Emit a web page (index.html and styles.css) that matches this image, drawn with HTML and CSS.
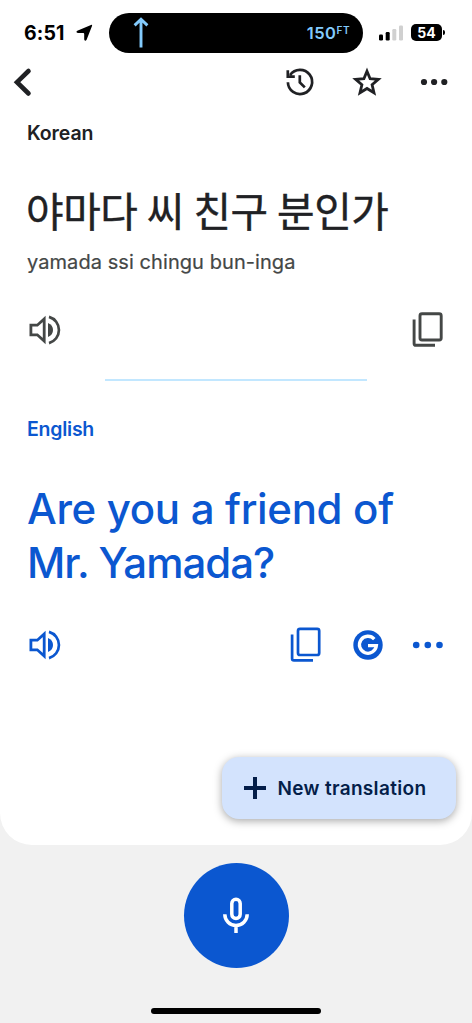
FILE: index.html
```html
<!DOCTYPE html>
<html lang="en">
<head>
<meta charset="utf-8">
<title>Translate</title>
<link rel="stylesheet" href="styles.css">
</head>
<body>
<main class="screen">
  <section class="card">
    <header class="status">
      <span class="time">6:51</span>
      <svg class="location" width="18" height="18" viewBox="0 0 18 18"><path d="M16 .9Q17.6.4 17 2L11.6 15.8Q10.2 18 9.2 15.5V9.9Q9.2 9 8.3 9H2.9Q.2 8.2 2.3 6.7Z"/></svg>
      <div class="island">
        <svg width="16" height="32" viewBox="0 0 16 32"><path d="M8 30.4V3M1.6 8.4 8 2.2 14.4 8.4" fill="none" stroke="#83cbfd" stroke-width="2.9"/></svg>
        <span class="distance">150<span class="unit">FT</span></span>
      </div>
      <svg class="signal" width="25" height="16" viewBox="0 0 25 16"><rect y="9.5" width="4" height="6" rx="1.2"/><rect x="6.7" y="7" width="4" height="8.5" rx="1.2"/><g fill="#d0d0d0"><rect x="13.3" y="4" width="4" height="11.5" rx="1.2"/><rect x="20" y=".5" width="4" height="15" rx="1.2"/></g></svg>
      <span class="battery">54</span><span class="battery-tip"></span>
    </header>
    <nav class="toolbar">
      <svg class="back" width="20" height="30" viewBox="0 0 20 30"><path d="M15.5 4 4 15.2 15.5 26.5" fill="none" stroke="#202124" stroke-width="4.6" stroke-linecap="round"/></svg>
      <svg class="history" width="30" height="30" viewBox="0 0 30 30" fill="none" stroke="#202124" stroke-width="2.7"><path d="M2.9 15.2A12.1 12.1 0 1 0 5.1 8M2.8 3.2V9.6H9.8M14.8 8.3V15.4L19.8 20.4"/></svg>
      <svg class="star" width="32" height="32" viewBox="0 0 32 32"><path d="M16 5.2 19.1 12.7 27.3 13.4 21.1 18.7 23 26.8 16 22.5 9 26.8 10.9 18.7 4.7 13.4 12.9 12.7Z" fill="none" stroke="#202124" stroke-width="2.8"/></svg>
      <svg class="more" width="28" height="8" viewBox="0 0 28 8" fill="#202124"><circle cx="4" cy="4" r="3.1"/><circle cx="14.1" cy="4" r="3.1"/><circle cx="24.3" cy="4" r="3.1"/></svg>
    </nav>
    <article class="source">
      <h2 class="language">Korean</h2>
      <p class="phrase" lang="ko">야마다 씨 친구 분인가</p>
      <p class="reading">yamada ssi chingu bun-inga</p>
      <div class="actions">
        <svg class="speaker" width="34" height="32" viewBox="0 0 34 32"><path d="M2.9 11.2H9.3L16.2 5V27L9.3 20.8H2.9Z" fill="none" stroke="currentColor" stroke-width="2.8"/><path d="M20 9Q25 11 25 16T20 23Z" fill="currentColor"/><path d="M21 2.9A13.6 13.6 0 0 1 21 29.1" fill="none" stroke="currentColor" stroke-width="2.7"/></svg>
        <svg class="copy" width="32" height="36" viewBox="0 0 32 36" fill="none" stroke="currentColor" stroke-width="2.9"><rect x="8" y="1.8" width="21.2" height="26.2" rx="2"/><path d="M2.1 7.5V31.4Q2.1 33.3 4 33.3H23"/></svg>
      </div>
    </article>
    <hr class="divider">
    <article class="target">
      <h2 class="language">English</h2>
      <p class="translation"><span class="line-one">Are you a friend of</span><br><span class="line-two">Mr. Yamada?</span></p>
      <div class="actions">
        <svg class="speaker" width="34" height="32" viewBox="0 0 34 32"><path d="M2.9 11.2H9.3L16.2 5V27L9.3 20.8H2.9Z" fill="none" stroke="currentColor" stroke-width="2.8"/><path d="M20 9Q25 11 25 16T20 23Z" fill="currentColor"/><path d="M21 2.9A13.6 13.6 0 0 1 21 29.1" fill="none" stroke="currentColor" stroke-width="2.7"/></svg>
        <svg class="copy" width="32" height="36" viewBox="0 0 32 36" fill="none" stroke="currentColor" stroke-width="2.7"><rect x="8" y="1.8" width="21.2" height="26.2" rx="2"/><path d="M2.1 7.5V31.4Q2.1 33.3 4 33.3H23"/></svg>
        <svg class="google" width="30" height="30" viewBox="0 0 30 30"><circle cx="15" cy="15" r="14.7" fill="currentColor"/><path d="M21.3 9.1A8.5 8.5 0 1 0 23.4 15.6H15" fill="none" stroke="#fff" stroke-width="3.3"/></svg>
        <svg class="more" width="32" height="8" viewBox="0 0 32 8" fill="currentColor"><circle cx="4.2" cy="4" r="3.3"/><circle cx="15.8" cy="4" r="3.3"/><circle cx="27.5" cy="4" r="3.3"/></svg>
      </div>
    </article>
    <button class="new"><svg width="22" height="22" viewBox="0 0 22 22"><path d="M11 0V22M0 11H22" stroke="#041e49" stroke-width="4"/></svg><span>New translation</span></button>
  </section>
  <footer class="dock">
    <button class="mic" aria-label="Speak"><svg width="28" height="37" viewBox="0 0 28 37" fill="none" stroke="#fff" stroke-width="3.5"><rect x="9.8" y="2.2" width="8.4" height="19.2" rx="4.2"/><path d="M2.8 17.3A11.2 11.2 0 0 0 25.2 17.3M14 28V36"/></svg></button>
    <div class="home"></div>
  </footer>
</main>
</body>
</html>
```
FILE: styles.css
```css
* { box-sizing: border-box; }
body { margin: 0; background: #f1f1f1; font-family: Inter, "Noto Sans CJK KR", sans-serif; }
h2, p { margin: 0; white-space: nowrap; }
svg { display: block; flex: none; }
button { border: 0; padding: 0; font: inherit; }
.screen { width: 472px; height: 1023px; overflow: hidden; display: flex; flex-direction: column; }
.card { height: 845px; flex: none; background: #fff; border-radius: 0 0 32px 32px; display: flex; flex-direction: column; }
.status { height: 65px; flex: none; display: flex; align-items: center; padding-left: 24px; }
.time { width: 51px; font-size: 19.5px; font-weight: 700; letter-spacing: .1px; }
.location { margin-right: 16px; }
.island { width: 254px; height: 40px; border-radius: 20px; background: #000; display: flex; align-items: center; justify-content: space-between; padding: 0 13px 0 24px; }
.distance { color: #83cbfd; font-size: 16.5px; font-weight: 600; letter-spacing: .5px; display: flex; }
.unit { font-size: 10px; line-height: 15px; }
.signal { margin-left: 16px; }
.battery { margin-left: 7px; width: 31px; height: 17px; border-radius: 5px; background: #000; color: #fff; font-size: 14px; font-weight: 700; line-height: 17px; text-align: center; }
.battery-tip { margin-left: 1px; width: 2px; height: 5px; border-radius: 0 2px 2px 0; background: #000; }
.toolbar { height: 34px; flex: none; display: flex; align-items: center; padding-left: 13px; }
.history { margin-left: 252px; }
.star { margin-left: 36px; }
.toolbar .more { margin-left: 37px; }
.source { height: 280px; flex: none; color: #444746; }
.language { padding: 22px 0 0 27px; font-size: 19.5px; line-height: 24px; font-weight: 600; letter-spacing: -.1px; }
.source .language { color: #202124; }
.phrase { padding: 37px 0 0 26px; font: 500 40.8px/56px "Noto Sans CJK KR", sans-serif; font-weight: 400; -webkit-text-stroke: .4px #202124; letter-spacing: -.4px; word-spacing: -1.6px; color: #202124; }
.reading { padding: 12px 0 0 27px; font-size: 20px; line-height: 24px; letter-spacing: .07px; -webkit-text-stroke: .2px #444746; }
.actions { display: flex; align-items: center; height: 36px; padding-left: 28px; }
.source .actions { margin-top: 38px; }
.source .copy { margin-left: 350px; }
.divider { width: 262px; height: 2px; flex: none; border: 0; margin: 0 auto 1px; background: #c2e7ff; }
.target { height: 376px; flex: none; color: #0b57d0; }
.target .language { padding-top: 35px; letter-spacing: -.25px; }
.translation { padding: 41px 0 0 27px; font-size: 42px; line-height: 54px; font-weight: 500; }
.line-one { letter-spacing: -.33px; }
.line-two { letter-spacing: -1px; }
.target .actions { margin-top: 37px; }
.target .copy { margin-left: 228px; }
.google { margin-left: 31px; }
.target .more { margin-left: 29px; }
.new { width: 234px; height: 62px; flex: none; margin-left: 221.5px; margin-top: -1px; border-radius: 17px; background: #d3e3fd; color: #041e49; box-shadow: 0 2px 8px rgba(0,0,0,.35); display: flex; align-items: center; padding-left: 22px; gap: 12px; font-size: 19px; font-weight: 600; letter-spacing: .33px; white-space: nowrap; }
.dock { height: 178px; display: flex; flex-direction: column; align-items: center; padding-top: 18px; }
.mic { width: 105px; height: 105px; border-radius: 50%; background: #0b57d0; display: grid; place-items: center; }
.home { width: 170px; height: 6px; border-radius: 3px; background: #000; margin-top: 40px; }
```
